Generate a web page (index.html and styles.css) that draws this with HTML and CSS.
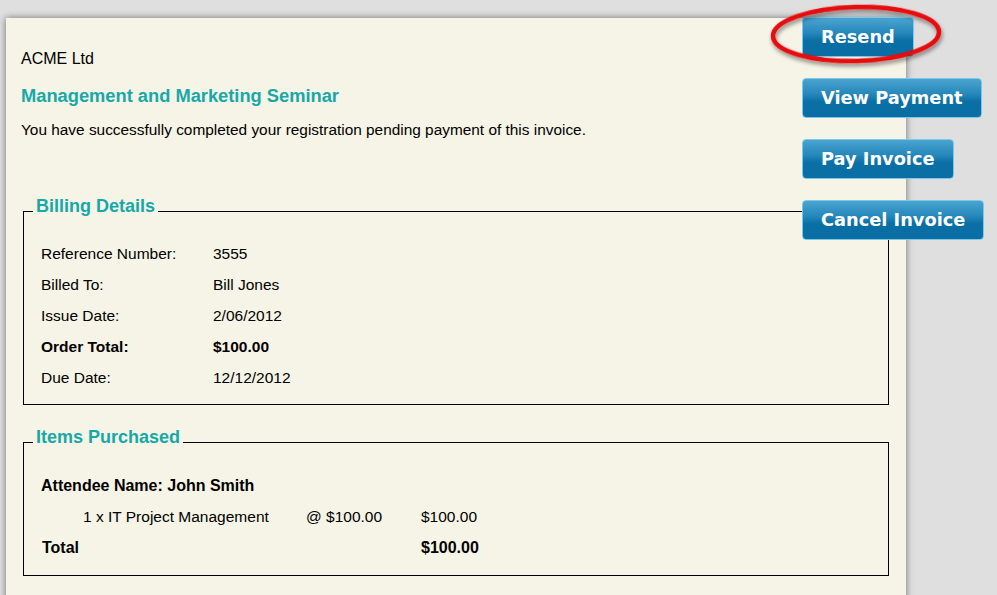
FILE: index.html
```
<!DOCTYPE html>
<html>
<head>
<meta charset="utf-8">
<title>Invoice</title>
<link rel="stylesheet" href="styles.css">
</head>
<body>
<div class="page">
  <div class="panel">
    <div class="company">ACME Ltd</div>
    <h1 class="event">Management and Marketing Seminar</h1>
    <p class="intro">You have successfully completed your registration pending payment of this invoice.</p>

    <fieldset class="box billing">
      <legend>Billing Details</legend>
      <div class="details">
        <div class="label">Reference Number:</div><div class="value">3555</div>
        <div class="label">Billed To:</div><div class="value">Bill Jones</div>
        <div class="label">Issue Date:</div><div class="value">2/06/2012</div>
        <div class="label strong">Order Total:</div><div class="value strong">$100.00</div>
        <div class="label">Due Date:</div><div class="value">12/12/2012</div>
      </div>
    </fieldset>

    <fieldset class="box items">
      <legend>Items Purchased</legend>
      <div class="attendee">Attendee Name: John Smith</div>
      <div class="line">
        <div class="item-name">1 x IT Project Management</div>
        <div class="item-price">@ $100.00</div>
        <div class="item-amount">$100.00</div>
      </div>
      <div class="line total">
        <div class="item-total-label">Total</div>
        <div></div>
        <div class="item-amount">$100.00</div>
      </div>
    </fieldset>
  </div>

  <div class="actions">
    <button class="btn">Resend</button>
    <button class="btn">View Payment</button>
    <button class="btn">Pay Invoice</button>
    <button class="btn">Cancel Invoice</button>
  </div>

  <svg class="highlight" width="200" height="80" viewBox="0 0 200 80">
    <defs>
      <filter id="sh" x="-20%" y="-30%" width="140%" height="170%">
        <feDropShadow dx="1" dy="3" stdDeviation="2" flood-color="#000" flood-opacity="0.45"/>
      </filter>
    </defs>
    <ellipse cx="96" cy="34" rx="83" ry="27" fill="none" stroke="#e8070b" stroke-width="4.5" filter="url(#sh)" transform="rotate(-1.5 96 34)"/>
  </svg>
</div>
</body>
</html>
```
FILE: styles.css
```
html, body {
  margin: 0;
  padding: 0;
  background: #dfdfdf;
  overflow: hidden;
}

body {
  font-family: "Liberation Sans", Arial, sans-serif;
  color: #000;
}

.page {
  position: relative;
  width: 997px;
  height: 595px;
  overflow: hidden;
}

.panel {
  margin: 18px 0 0 6px;
  width: 900px;
  min-height: 600px;
  box-sizing: border-box;
  padding: 32px 15px 0 15px;
  background: #f6f4e6;
  box-shadow: 0 0 7px rgba(0, 0, 0, 0.5);
}

.company {
  font-size: 16px;
  line-height: 18px;
}

.event {
  margin: 17px 0 0 0;
  font-size: 18.3px;
  line-height: 21px;
  font-weight: bold;
  color: #17a8a8;
}

.intro {
  margin: 15px 0 0 0;
  font-size: 15.4px;
  line-height: 18px;
}

.box {
  margin: 57px 2px 0 2px;
  border: 1px solid #000;
  padding: 0 17px;
  min-width: 0;
}

.box legend {
  font-size: 18px;
  line-height: 20px;
  font-weight: bold;
  color: #17a8a8;
  padding: 0 3px 10px 3px;
  margin-left: -8px;
}

.billing {
  padding-top: 12px;
  padding-bottom: 11px;
}

.items {
  margin-top: 22px;
  padding-top: 13px;
  padding-bottom: 12px;
}

.details {
  display: grid;
  grid-template-columns: 172px auto;
  font-size: 15.5px;
  line-height: 31px;
}

.strong {
  font-weight: bold;
}

.attendee {
  font-size: 16px;
  font-weight: bold;
  line-height: 31px;
}

.line {
  display: grid;
  grid-template-columns: 265px 115px auto;
  font-size: 15.5px;
  line-height: 31px;
}

.item-name {
  padding-left: 42px;
}

.total {
  font-weight: bold;
  font-size: 16px;
}

.item-total-label {
  padding-left: 1px;
}

.actions {
  position: absolute;
  left: 802px;
  top: 17px;
  display: flex;
  flex-direction: column;
  align-items: flex-start;
  gap: 21px;
}

.btn {
  height: 40px;
  box-sizing: border-box;
  padding: 0 18px;
  border: 1px solid #79c9ea;
  border-radius: 4px;
  background: linear-gradient(to bottom, #4ba4d0 0%, #2587bb 40%, #0a6fa5 60%, #0a6ea4 100%);
  color: #fff;
  font-family: "DejaVu Sans", Verdana, sans-serif;
  font-weight: bold;
  font-size: 17.8px;
  line-height: 38px;
  white-space: nowrap;
  cursor: pointer;
}

.highlight {
  position: absolute;
  left: 760px;
  top: 0;
  overflow: visible;
}
```
